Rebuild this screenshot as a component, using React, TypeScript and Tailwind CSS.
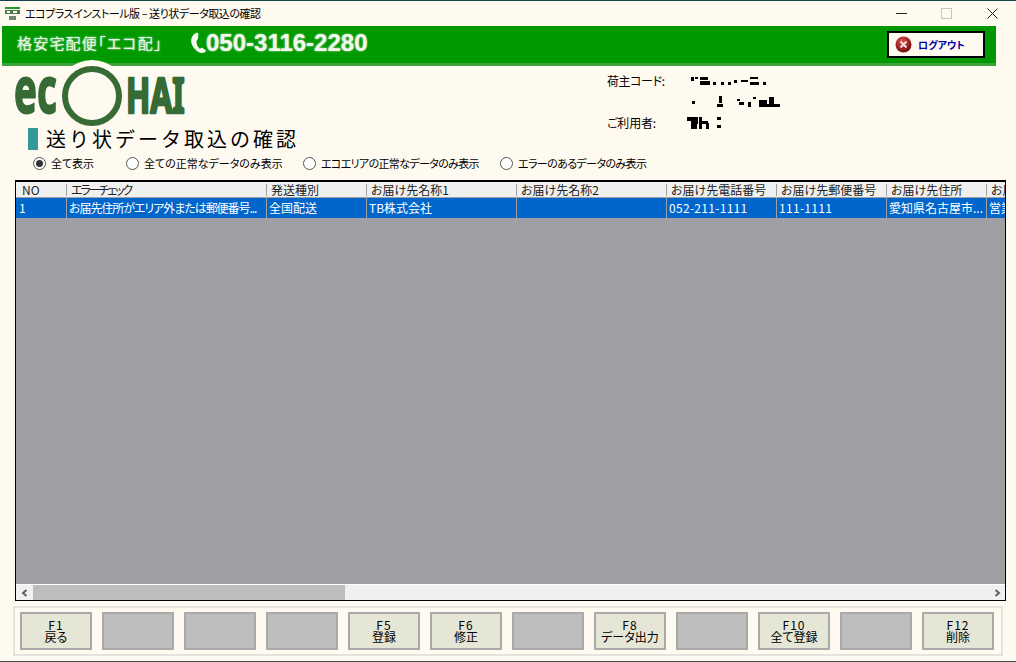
import React from 'react';

const jp = "font-['Noto_Sans_CJK_JP','Liberation_Sans',sans-serif] [font-feature-settings:'palt']";

const columns = [
  { title: 'NO', value: '1', width: 'w-[50px]', pad: 'pl-[3px]', head: '', cell: '' },
  { title: 'エラーチェック', value: 'お届先住所がエリア外または郵便番号...', width: 'w-[200px]', pad: 'pl-[2px]', head: 'tracking-[-2.1px]', cell: 'tracking-[-1.05px]' },
  { title: '発送種別', value: '全国配送', width: 'w-[100px]', pad: 'pl-[2px]', head: '', cell: '' },
  { title: 'お届け先名称1', value: 'TB株式会社', width: 'w-[150px]', pad: 'pl-[2px]', head: '', cell: '' },
  { title: 'お届け先名称2', value: '', width: 'w-[150px]', pad: 'pl-[2px]', head: '', cell: '' },
  { title: 'お届け先電話番号', value: '052-211-1111', width: 'w-[110px]', pad: 'pl-[2px]', head: '', cell: 'tracking-[0.3px]' },
  { title: 'お届け先郵便番号', value: '111-1111', width: 'w-[110px]', pad: 'pl-[2px]', head: '', cell: 'tracking-[0.3px]' },
  { title: 'お届け先住所', value: '愛知県名古屋市...', width: 'w-[100px]', pad: 'pl-[2px]', head: '', cell: '' },
  { title: 'お届け先住所2', value: '営業所', width: 'w-[100px]', pad: 'pl-[2px]', head: '', cell: '' },
];

const radios = [
  { label: '全て表示', width: 'w-[93px]', track: '', checked: true },
  { label: '全ての正常なデータのみ表示', width: 'w-[177px]', track: '', checked: false },
  { label: 'エコエリアの正常なデータのみ表示', width: 'w-[197px]', track: 'tracking-[-0.65px]', checked: false },
  { label: 'エラーのあるデータのみ表示', width: 'w-[170px]', track: 'tracking-[-0.6px]', checked: false },
];

const fkeys: { key?: string; label?: string }[] = [
  { key: 'F1', label: '戻る' },
  {},
  {},
  {},
  { key: 'F5', label: '登録' },
  { key: 'F6', label: '修正' },
  {},
  { key: 'F8', label: 'データ出力' },
  {},
  { key: 'F10', label: '全て登録' },
  {},
  { key: 'F12', label: '削除' },
];

// masked (pixelated) account values in the header
const Masked = ({ cells, w, h }: { cells: number[][]; w: number; h: number }) => (
  <svg width={w} height={h} className="block" shapeRendering="crispEdges">
    {cells.map((c, i) => (
      <rect key={i} x={c[0]} y={c[1]} width={c[2]} height={c[3]} fill="#000" />
    ))}
  </svg>
);

const Logo = () => (
  <svg width="176" height="68" viewBox="0 0 176 68" className="block overflow-visible">
    <circle cx="80" cy="37" r="36" fill="#fffaf0" />
    <circle cx="80" cy="37" r="27" fill="none" stroke="#366b36" strokeWidth="6" />
    <text
      transform="translate(2 54) scale(0.6 1)"
      fill="#366b36"
      stroke="#366b36"
      strokeWidth="2"
      strokeLinejoin="round"
      fontFamily="'Noto Sans','Liberation Sans',sans-serif"
      fontWeight="700"
      fontSize="64"
    >
      ec
    </text>
    <text
      transform="translate(114 54) scale(0.66 1)"
      fill="#366b36"
      stroke="#366b36"
      strokeWidth="2.5"
      strokeLinejoin="round"
      fontFamily="'Noto Sans','Liberation Sans',sans-serif"
      fontWeight="700"
      fontSize="48"
    >
      HAI
    </text>
  </svg>
);

export default function App() {
  return (
    <div className={`w-[1016px] h-[662px] overflow-hidden bg-[#fffaf0] flex flex-col text-black ${jp}`}>
      <div className="h-px bg-[#14454a] shrink-0" />

      {/* title bar */}
      <div className="h-[25px] shrink-0 flex items-center pl-[5px] text-[11px] leading-none">
        <svg width="15" height="15" viewBox="0 0 15 15" className="mr-[5px] shrink-0">
          <rect x="0" y="1" width="15" height="2" fill="#1f9a2f" />
          <rect x="0" y="4" width="15" height="4" fill="#4a7a4a" />
          <rect x="2" y="5" width="3" height="2" fill="#fff" />
          <rect x="8" y="5" width="4" height="2" fill="#fff" />
          <rect x="4" y="10" width="7" height="4" fill="#6a8a6a" />
        </svg>
        <span className="whitespace-nowrap tracking-[-0.45px]">エコプラスインストール版 – 送り状データ取込の確認</span>
        <div className="ml-auto flex items-center">
          <svg width="11" height="11" viewBox="0 0 11 11" className="mr-[34px]">
            <path d="M0 5.5H11" stroke="#222" strokeWidth="1" />
          </svg>
          <svg width="11" height="11" viewBox="0 0 11 11" className="mr-[35px]">
            <rect x="0.5" y="0.5" width="10" height="10" fill="none" stroke="#c4c4c4" />
          </svg>
          <svg width="11" height="11" viewBox="0 0 11 11" className="mr-[18px]">
            <path d="M0.5 0.5L10.5 10.5M10.5 0.5L0.5 10.5" stroke="#222" strokeWidth="1" />
          </svg>
        </div>
      </div>

      {/* green band */}
      <div className="ml-[2px] w-[994px] h-[40px] shrink-0 bg-[#009900] border-b-[3px] border-[#3ca03c] flex items-center pl-[15px] pb-[3px]">
        <span className="w-[173px] text-[15px] tracking-[1.2px] text-[#e9f6e4] [text-shadow:0_0_2px_#cfeecf] whitespace-nowrap">
          格安宅配便「エコ配」
        </span>
        <svg width="17" height="22" viewBox="0 0 17 22" className="shrink-0">
          <path
            d="M6 1C2 3 0.5 7 1.5 11.5C3 16 7 20 11 21C14 21.5 16 20 16 18.5L12 15.5C11 16.5 10 17 9 16C7 14 6.5 11 6.5 9C7.5 8 8 7 8 6L8.5 1.5C8 0.5 7 0.5 6 1Z"
            fill="#f4fbf0"
          />
        </svg>
        <span className="w-[162px] -ml-px font-['Liberation_Sans',sans-serif] font-bold text-[24px] leading-none text-[#f2f8ec] [text-shadow:0_0_2px_#d8f0d8] whitespace-nowrap">
          050-3116-2280
        </span>
        <button className="ml-[519px] w-[98px] h-[27px] mt-[3px] bg-[#fffaf0] border-2 border-black flex items-center pl-[6px]">
          <svg width="17" height="17" viewBox="0 0 17 17" className="shrink-0">
            <defs>
              <radialGradient id="logoutBall" cx="40%" cy="30%" r="75%">
                <stop offset="0%" stopColor="#e04a4a" />
                <stop offset="100%" stopColor="#6a0a0a" />
              </radialGradient>
            </defs>
            <circle cx="8.5" cy="8.5" r="8" fill="url(#logoutBall)" />
            <path d="M5.5 5.5L11.5 11.5M11.5 5.5L5.5 11.5" stroke="#f3dede" strokeWidth="2" />
          </svg>
          <span className="ml-[6px] text-[10px] font-bold text-[#0000a8] leading-none whitespace-nowrap">ログアウト</span>
        </button>
      </div>

      {/* heading area */}
      <div className="h-[114px] shrink-0 relative">
        <div className="flex items-start">
          <div className="w-[592px] pl-[12px]">
            <div className="-mt-[8px] translate-y-[1px] relative">
              <Logo />
            </div>
          </div>
          <div className="pl-[15px] pt-[6px] text-[12px] leading-none">
            <div className="flex items-center h-[18px]">
              <span className="w-[84px] tracking-[-0.4px]">荷主コード:</span>
              <Masked
                w={78}
                h={10}
                cells={[[0, 1, 3, 4], [4, 1, 3, 2], [9, 1, 8, 3], [9, 5, 10, 4], [22, 6, 3, 3], [30, 6, 3, 3], [37, 6, 3, 3], [43, 4, 3, 3], [50, 4, 7, 2], [59, 1, 8, 2], [59, 6, 9, 3], [72, 6, 3, 3]]}
              />
            </div>
            <div className="flex items-center h-[24px] pl-[84px]">
              <Masked
                w={95}
                h={12}
                cells={[[1, 5, 3, 3], [28, 0, 3, 7], [26, 8, 6, 3], [46, 3, 3, 2], [48, 6, 5, 3], [57, 6, 3, 5], [62, 1, 3, 2], [68, 4, 8, 7], [78, 1, 5, 10], [76, 8, 13, 3]]}
              />
            </div>
            <div className="flex items-center h-[18px]">
              <span className="w-[80px] tracking-[-0.2px]">ご利用者:</span>
              <Masked
                w={34}
                h={14}
                cells={[[0, 1, 11, 4], [4, 5, 7, 3], [4, 8, 6, 5], [12, 1, 3, 12], [15, 5, 6, 3], [19, 7, 3, 6], [30, 1, 4, 3], [30, 9, 4, 3]]}
              />
            </div>
          </div>
        </div>

        {/* page title */}
        <div className="absolute left-[28px] top-[62px] flex items-center h-[22px]">
          <div className="w-[10px] h-[22px] bg-[#339999]" />
          <span className="ml-[8px] text-[20px] leading-none tracking-[3px] whitespace-nowrap [font-feature-settings:normal]">
            送り状データ取込の確認
          </span>
        </div>

        {/* filter radios */}
        <div className="absolute left-[33px] top-[90px] flex items-center h-[15px] text-[11px] leading-none">
          {radios.map((r) => (
            <div key={r.label} className={`flex items-center ${r.width} whitespace-nowrap`}>
              <span className="w-[13px] h-[13px] rounded-full border border-[#555] bg-white flex items-center justify-center shrink-0">
                {r.checked && <span className="w-[7px] h-[7px] rounded-full bg-[#333]" />}
              </span>
              <span className={`ml-[5px] ${r.track}`}>{r.label}</span>
            </div>
          ))}
        </div>
      </div>

      {/* grid */}
      <div className="ml-[15px] w-[991px] h-[421px] shrink-0 border-t-2 border-x border-b border-black bg-[#a0a0a4] flex flex-col overflow-hidden text-[12px] leading-none">
        <div className="flex h-[15px] shrink-0 bg-[#f0f0f0] whitespace-nowrap overflow-hidden">
          {columns.map((c, i) => (
            <div key={c.title} className={`${c.width} shrink-0 h-full flex items-center overflow-hidden ${i === 0 ? 'pl-[6px]' : 'pl-[3px]'}`}>
              {i > 0 && <span className="w-px h-[12px] bg-[#a0a0a0] -ml-[3px] mr-[4px] shrink-0" />}
              <span className={`text-[#222] ${c.head}`}>{c.title}</span>
            </div>
          ))}
        </div>
        <div className="h-px bg-[#a0a0a0] shrink-0" />
        <div className="flex h-[20px] shrink-0 bg-[#0066cc] text-white whitespace-nowrap overflow-hidden">
          {columns.map((c, i) => (
            <div key={c.title} className={`${c.width} shrink-0 h-full flex items-center overflow-hidden ${c.pad} ${i > 0 ? 'border-l border-[#a0a0a0]' : ''}`}>
              <span className={c.cell}>{c.value}</span>
            </div>
          ))}
        </div>
        <div className="flex-1" />
        <div className="h-[16px] shrink-0 bg-[#f0f0f0] border-t border-white flex items-center">
          <div className="w-[17px] h-full flex items-center justify-center">
            <svg width="8" height="8" viewBox="0 0 8 8">
              <path d="M5.5 1L2 4L5.5 7" fill="none" stroke="#606060" strokeWidth="2" />
            </svg>
          </div>
          <div className="w-[312px] h-full bg-[#bdbdbd]" />
          <div className="ml-auto w-[17px] h-full flex items-center justify-center">
            <svg width="8" height="8" viewBox="0 0 8 8">
              <path d="M2.5 1L6 4L2.5 7" fill="none" stroke="#606060" strokeWidth="2" />
            </svg>
          </div>
        </div>
      </div>

      {/* function keys */}
      <div className="ml-[13px] mt-[5px] w-[990px] h-[50px] shrink-0 border-2 border-[#e4e4dc] flex items-center gap-[10px] pl-[5px] text-[12px] leading-[12px]">
        {fkeys.map((f, i) => (
          <div
            key={i}
            className={`w-[72px] h-[38px] shrink-0 border-2 border-[#a9a9a9] flex flex-col items-center justify-center text-center whitespace-nowrap ${
              f.key ? 'bg-[#e5e6d5]' : 'bg-[#bdbdbd]'
            }`}
          >
            {f.key && (
              <>
                <span className="tracking-[1px]">{f.key}</span>
                <span>{f.label}</span>
              </>
            )}
          </div>
        ))}
      </div>

      <div className="mt-auto h-px bg-[#3f4f4a] shrink-0" />
    </div>
  );
}
